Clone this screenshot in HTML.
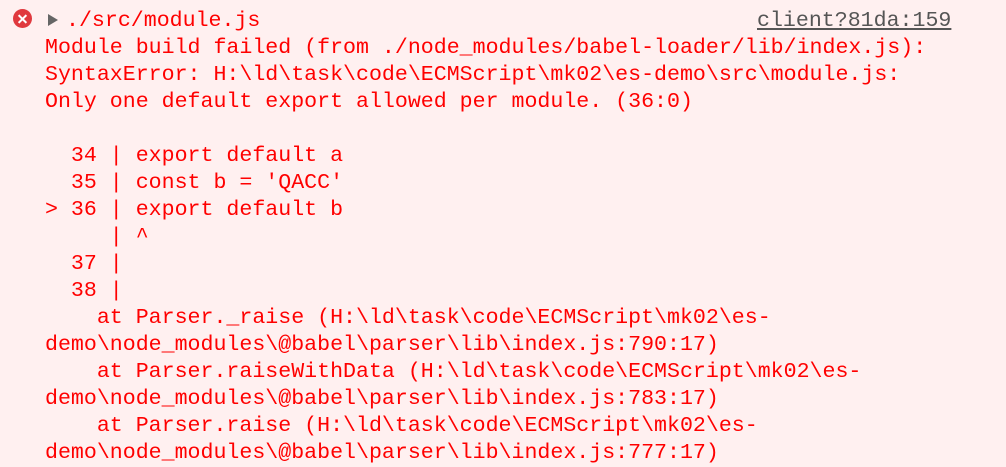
<!DOCTYPE html>
<html><head><meta charset="utf-8"><style>
html,body{margin:0;padding:0;background:#fff0f0;width:1006px;height:463px;overflow:hidden}
.m{font-family:"Liberation Mono",monospace;font-size:21.6px;line-height:27px;color:#f00;white-space:pre;position:absolute}
#ic{position:absolute;left:13px;top:9px;width:19px;height:19px;border-radius:50%;background:#e0393e}
#ic:before,#ic:after{content:"";position:absolute;left:4px;top:8.5px;width:11px;height:2px;background:#fff;transform:rotate(45deg)}
#ic:after{transform:rotate(-45deg)}
#tri{position:absolute;left:48px;top:14px;width:0;height:0;border-left:10px solid #666;border-top:6px solid transparent;border-bottom:6px solid transparent}
#lnk{position:absolute;left:757px;top:8px;color:#555;text-decoration:underline}
</style></head><body>
<div id="ic"></div><div id="tri"></div>
<div class="m" style="left:66px;top:8px">./src/module.js</div>
<div class="m" id="lnk">client?81da:159</div>
<div class="m" style="left:45px;top:35px">Module build failed (from ./node_modules/babel-loader/lib/index.js):
SyntaxError: H:\ld\task\code\ECMScript\mk02\es-demo\src\module.js:
Only one default export allowed per module. (36:0)

  34 | export default a
  35 | const b = 'QACC'
&gt; 36 | export default b
     | ^
  37 |
  38 |
    at Parser._raise (H:\ld\task\code\ECMScript\mk02\es-
demo\node_modules\@babel\parser\lib\index.js:790:17)
    at Parser.raiseWithData (H:\ld\task\code\ECMScript\mk02\es-
demo\node_modules\@babel\parser\lib\index.js:783:17)
    at Parser.raise (H:\ld\task\code\ECMScript\mk02\es-
demo\node_modules\@babel\parser\lib\index.js:777:17)</div>
</body></html>
